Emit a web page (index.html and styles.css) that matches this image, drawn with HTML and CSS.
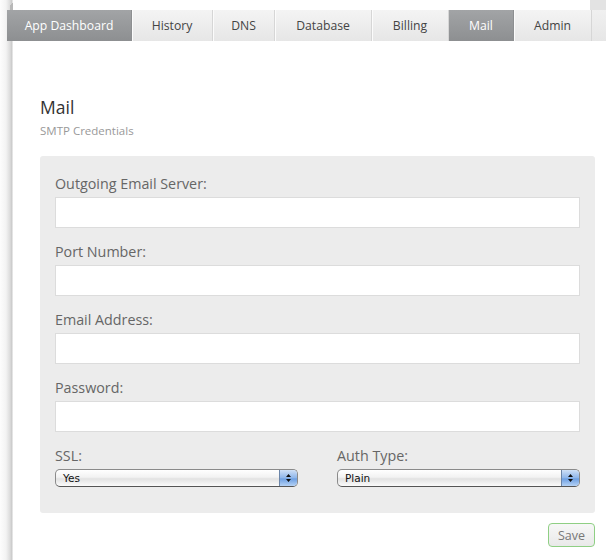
FILE: index.html
```html
<!DOCTYPE html>
<html>
<head>
<meta charset="utf-8">
<link rel="stylesheet" href="styles.css">
</head>
<body>
<div class="topstrip"><span class="corner"></span><span class="tr"></span></div>
<nav class="tabs">
  <a class="tab active">App Dashboard</a>
  <a class="tab">History</a>
  <a class="tab">DNS</a>
  <a class="tab">Database</a>
  <a class="tab">Billing</a>
  <a class="tab active">Mail</a>
  <a class="tab">Admin</a>
  <span class="tab-end"></span>
</nav>
<main class="page">
  <h1 class="title">Mail</h1>
  <p class="subtitle">SMTP Credentials</p>
  <form class="panel">
    <div class="field">
      <label class="label">Outgoing Email Server:</label>
      <input class="input" type="text">
    </div>
    <div class="field">
      <label class="label">Port Number:</label>
      <input class="input" type="text">
    </div>
    <div class="field">
      <label class="label">Email Address:</label>
      <input class="input" type="text">
    </div>
    <div class="field">
      <label class="label">Password:</label>
      <input class="input" type="password">
    </div>
    <div class="row">
      <div class="col">
        <label class="label">SSL:</label>
        <div class="select"><span class="select-text">Yes</span><span class="arrows"><svg width="7" height="10" viewBox="0 0 7 10"><path d="M3.5 1 L6 4 L1 4 Z M3.5 9 L6 6 L1 6 Z" fill="#111"/></svg></span></div>
      </div>
      <div class="col">
        <label class="label">Auth Type:</label>
        <div class="select"><span class="select-text">Plain</span><span class="arrows"><svg width="7" height="10" viewBox="0 0 7 10"><path d="M3.5 1 L6 4 L1 4 Z M3.5 9 L6 6 L1 6 Z" fill="#111"/></svg></span></div>
      </div>
    </div>
  </form>
  <div class="actions"><button class="save" type="button">Save</button></div>
</main>
</body>
</html>
```
FILE: styles.css
```css
html, body { margin: 0; padding: 0; }
body {
  width: 606px;
  height: 560px;
  overflow: hidden;
  font-family: "Open Sans", "Noto Sans", sans-serif;
  background: #fff linear-gradient(to right, #fdfdfd 0, #f3f3f3 6px, #dcdcdc 10px, #c8c8c8 12px, #fff 13px) no-repeat 0 0 / 13px 100%;
}
.topstrip { height: 10px; position: relative; }
.corner {
  position: absolute; left: 10px; top: 0; width: 3px; height: 10px;
  background: linear-gradient(135deg, transparent 40%, #b8b8b8 41%);
}
.tr { position: absolute; right: 0; top: 0; width: 16px; height: 10px; background: #e3e3e3; }
.tabs {
  display: flex;
  margin-left: 7px;
  height: 31px;
}
.tab {
  display: flex; align-items: center; justify-content: center;
  padding: 0;
  font-size: 12.2px;
  color: #444;
  background: linear-gradient(#f4f4f4, #e6e6e6);
  border-right: 1px solid #d6d6d6;
  box-shadow: inset 1px 0 0 #fbfbfb;
}
.tab:nth-child(1) { width: 124px; }
.tab:nth-child(2) { width: 80px; }
.tab:nth-child(3) { width: 61px; }
.tab:nth-child(4) { width: 96px; }
.tab:nth-child(5) { width: 76px; }
.tab:nth-child(6) { width: 64px; }
.tab:nth-child(7) { width: 77px; }
.tab.active {
  color: #fff;
  background: linear-gradient(#a2a4a6, #8d8f91);
  border-right-color: #8d8f91;
  box-shadow: none;
}
.tab-end { flex: 1; background: linear-gradient(#f0f0f0, #e6e6e6); }
.page {
  padding: 55px 11px 0 40px;
}
.title {
  margin: 0;
  font-size: 17.5px;
  font-weight: normal;
  line-height: 22px;
  color: #333;
}
.subtitle {
  margin: 6px 0 0;
  font-size: 11.5px;
  line-height: 14px;
  color: #999;
}
.panel {
  margin-top: 18px;
  background: #ececec;
  border-radius: 3px;
  padding: 18px 15px 26px;
}
.field { display: flex; flex-direction: column; margin-bottom: 14px; }
.label {
  display: block;
  font-size: 14.3px;
  line-height: 20px;
  color: #666;
  margin-bottom: 3px;
}
.input {
  box-sizing: border-box;
  height: 31px;
  margin: 0;
  border: 1px solid #dcdcdc;
  background: #fff;
  outline: none;
}
.row { display: flex; gap: 39px; }
.col { flex: 1; display: flex; flex-direction: column; }
.select {
  box-sizing: border-box;
  height: 18px;
  display: flex; align-items: center;
  border: 1px solid #8a8a8a;
  border-bottom-color: #555;
  border-radius: 5px;
  background: linear-gradient(#ffffff, #f2f2f2 45%, #e2e2e2 55%, #fbfbfb);
  overflow: hidden;
}
.select-text {
  flex: 1;
  padding-left: 7px;
  font-family: "DejaVu Sans", sans-serif;
  font-size: 10.5px;
  color: #111;
}
.arrows {
  width: 17px; height: 100%;
  display: flex; align-items: center; justify-content: center;
  background: linear-gradient(#cfe0f6, #8db5ea 50%, #6d9fe2 55%, #b5d2f5);
  border-left: 1px solid #6b85a8;
}
.actions { display: flex; justify-content: flex-end; margin-top: 10px; }
.save {
  width: 47px; height: 24px;
  border: 1px solid #8fcf84;
  border-radius: 4px;
  background: linear-gradient(#f7f7f7, #e9e9e9);
  font-family: "Open Sans", "Noto Sans", sans-serif;
  font-size: 12.5px;
  color: #777;
  padding: 0;
}
```
